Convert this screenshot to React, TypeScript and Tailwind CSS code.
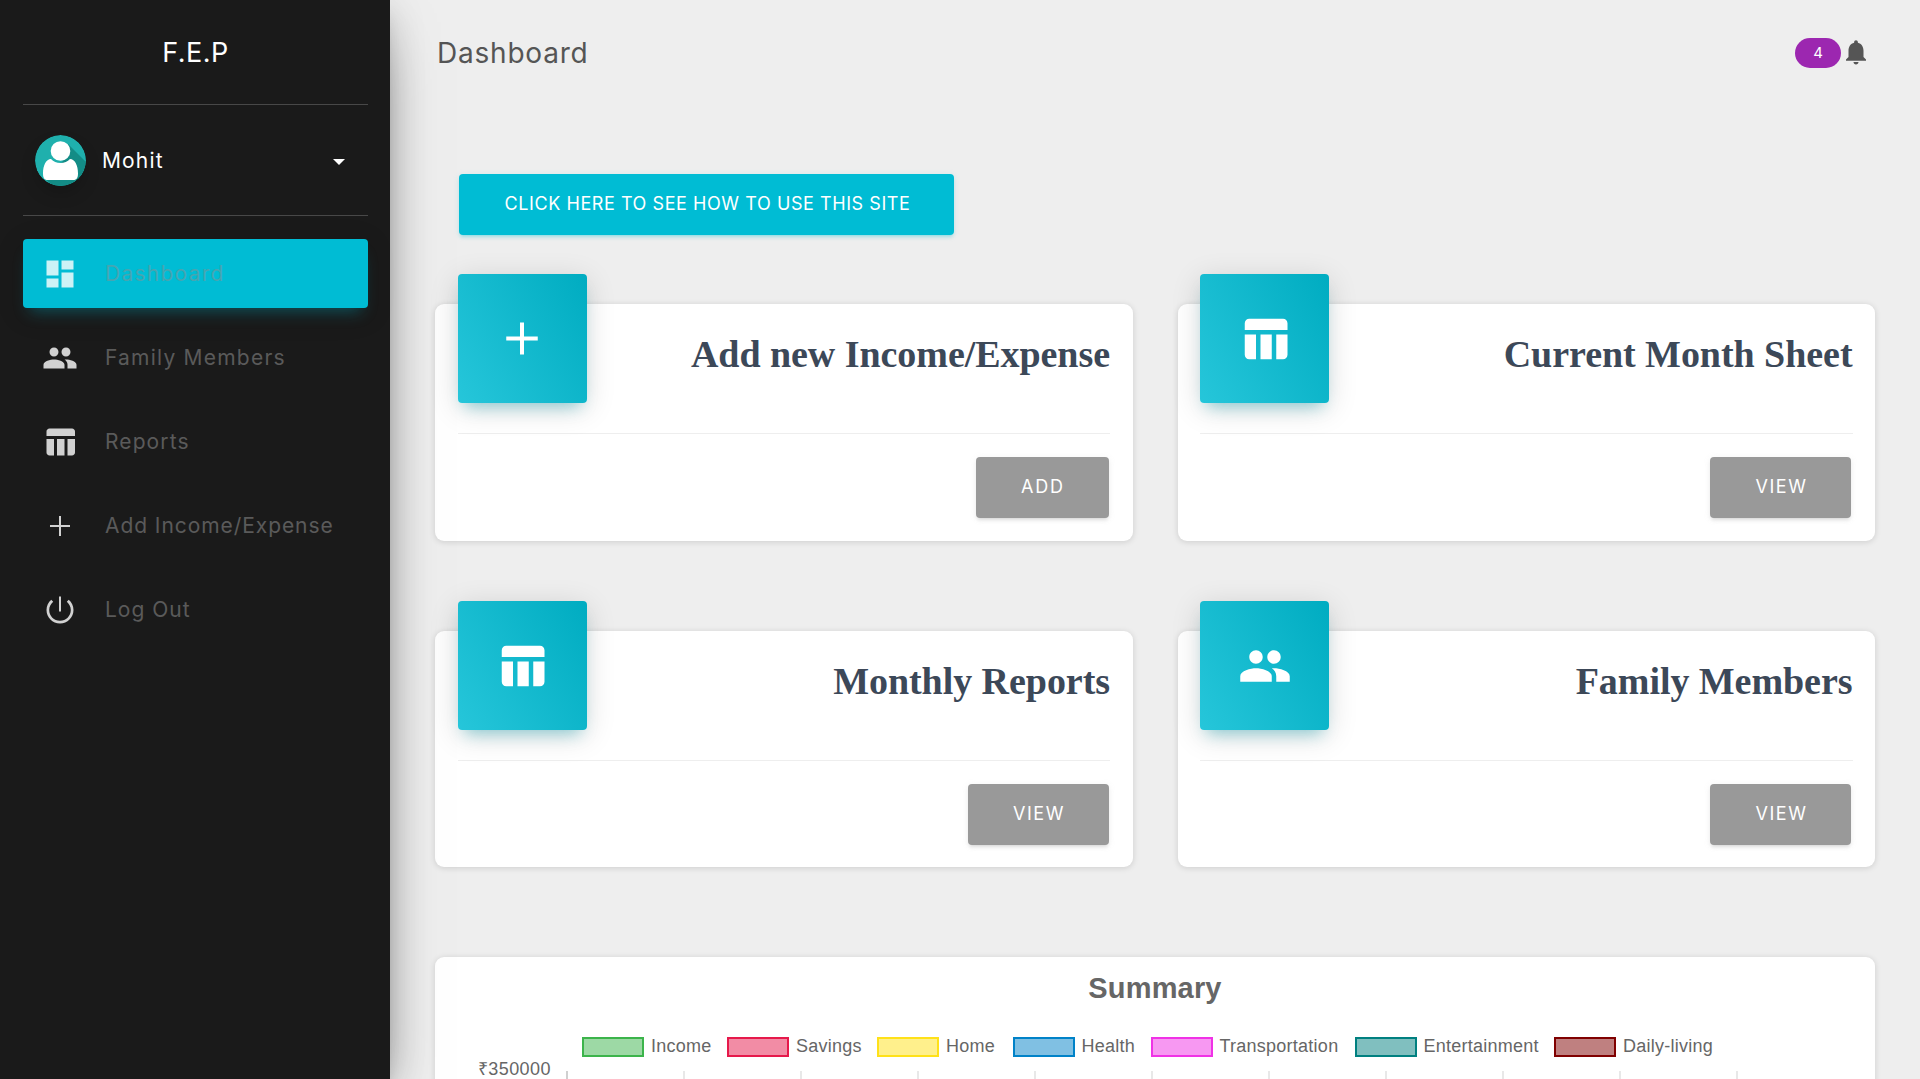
import type { ReactNode } from "react";

const PATHS = {
  dashboard: "M3 13h8V3H3v10zm0 8h8v-6H3v6zm10 0h8V11h-8v10zm0-18v6h8V3h-8z",
  people:
    "M16 11c1.66 0 2.99-1.34 2.99-3S17.66 5 16 5c-1.66 0-3 1.34-3 3s1.34 3 3 3zm-8 0c1.66 0 2.99-1.34 2.99-3S9.66 5 8 5C6.34 5 5 6.34 5 8s1.34 3 3 3zm0 2c-2.33 0-7 1.17-7 3.5V19h14v-2.5c0-2.33-4.67-3.5-7-3.5zm8 0c-.29 0-.62.02-.97.05 1.16.84 1.97 1.97 1.97 3.45V19h6v-2.5c0-2.33-4.67-3.5-7-3.5z",
  table:
    "M10 10.02h5V21h-5V10.02zM17 21h3c1.1 0 2-.9 2-2v-9h-5v11zm3-18H5c-1.1 0-2 .9-2 2v3h19V5c0-1.1-.9-2-2-2zM3 19c0 1.1.9 2 2 2h3V10H3v9z",
  add: "M19 12.67h-6.11v6.22h-1.78v-6.22H5v-1.78h6.11V4.67h1.78v6.22H19z",
  addThin: "M18.67 12.67H12.67V18.67H11.33V12.67H5.33V11.33H11.33V5.33H12.67V11.33H18.67z",
  power:
    "M12.67 3h-1.34v10h1.34V3zm5.16 2.17l-1.3 1.3C18.1 7.86 19.2 9.7 19.2 12c0 3.98-3.22 7.2-7.2 7.2s-7.2-3.22-7.2-7.2c0-2.3 1.1-4.14 2.67-5.53L6.17 5.17C4.23 6.82 3 9.26 3 12c0 4.97 4.03 9 9 9s9-4.03 9-9c0-2.74-1.23-5.18-3.17-6.83z",
  bell: "M12 22c1.1 0 2-.9 2-2h-4c0 1.1.89 2 2 2zm6-6v-5c0-3.07-1.64-5.64-4.5-6.32V4c0-.83-.67-1.500-1.500-1.500s-1.500.67-1.500 1.500v.68C7.63 5.36 6 7.92 6 11v5l-2 2v1h16v-1l-2-2z",
};

type IconName = keyof typeof PATHS;

function Icon({ name, className }: { name: IconName; className: string }) {
  return (
    <svg viewBox="0 0 24 24" fill="currentColor" className={className}>
      <path d={PATHS[name]} />
    </svg>
  );
}

function Avatar() {
  return (
    <svg
      viewBox="0 0 51 51"
      className="size-[51px] shrink-0 rounded-full shadow-[0_9px_18px_-4px_rgba(0,0,0,0.25)]"
    >
      <defs>
        <clipPath id="avatar-disc">
          <circle cx="25.5" cy="25.5" r="25.5" />
        </clipPath>
      </defs>
      <g clipPath="url(#avatar-disc)">
        <rect width="51" height="51" fill="#1fb0ad" />
        <path d="M33 9 L53 29 V53 H21 L10 44 L28 26Z" fill="#138c86" />
        <circle cx="25.5" cy="16" r="9.8" fill="#fff" />
        <path
          d="M16 24c2.500 2.600 5.500 4 9.500 4s7-1.400 9.500-4c5 0 8 6.500 8 14.500 0 5-2 6.500-4.700 6.500h-25.600c-2.700 0-4.700-1.500-4.700-6.500 0-8 3-14.500 8-14.500z"
          fill="#fff"
        />
      </g>
    </svg>
  );
}

const NAV: { icon: IconName; label: string; spacing: string; active?: boolean }[] = [
  { icon: "dashboard", label: "Dashboard", spacing: "tracking-[1.26px]", active: true },
  { icon: "people", label: "Family Members", spacing: "tracking-[1.22px]" },
  { icon: "table", label: "Reports", spacing: "tracking-[1.1px]" },
  { icon: "addThin", label: "Add Income/Expense", spacing: "tracking-[0.93px]" },
  { icon: "power", label: "Log Out", spacing: "tracking-[1px]" },
];

function Sidebar() {
  return (
    <aside className="relative z-10 flex w-[390px] shrink-0 flex-col bg-[#1a1a1a] pr-[22px] pl-[23px] font-[Inter,sans-serif] shadow-[0_24px_57px_-18px_rgba(0,0,0,0.56),0_6px_37px_0_rgba(0,0,0,0.12),0_12px_15px_-7px_rgba(0,0,0,0.2)]">
      <div className="flex h-[105px] items-center justify-center border-b border-[#484848] pt-[2px] text-[27px] tracking-[0.5px] text-white">
        F.E.P
      </div>
      <div className="flex h-[111px] items-center border-b border-[#484848] pl-3">
        <Avatar />
        <span className="mt-[2px] ml-4 text-[21px] tracking-[1.15px] text-white">Mohit</span>
        <span className="mt-[3px] mr-[23px] ml-auto border-x-6 border-t-6 border-x-transparent border-t-white" />
      </div>
      <nav className="mt-[23px] flex flex-col gap-[15px]">
        {NAV.map((item) => (
          <a
            key={item.label}
            className={
              item.active
                ? "flex h-[69px] items-center rounded-[4px] bg-[#00bcd4] pl-[19px] text-[#46a5b1] shadow-[0_6px_30px_0_rgba(0,0,0,0.12),0_10px_15px_-7px_rgba(0,188,212,0.4)]"
                : "flex h-[69px] items-center pl-[19px] text-[#5a5a5a]"
            }
          >
            <Icon
              name={item.icon}
              className={item.active ? "size-9 text-[#ccf2f6]" : "size-9 text-[#d1d1d1]"}
            />
            <span className={`mt-[1px] ml-[27px] text-[21px] whitespace-nowrap ${item.spacing}`}>
              {item.label}
            </span>
          </a>
        ))}
      </nav>
    </aside>
  );
}

function Button({ children, className }: { children: ReactNode; className: string }) {
  return (
    <button
      className={`flex h-[61px] items-center justify-center rounded-[4px] pb-[2px] pl-[2px] font-[Inter,sans-serif] text-[18px] text-white ${className}`}
    >
      {children}
    </button>
  );
}

const GREY_SHADOW =
  "bg-[#999] shadow-[0_3px_3px_0_rgba(153,153,153,0.14),0_4px_2px_-3px_rgba(153,153,153,0.2),0_1px_7px_0_rgba(153,153,153,0.12)]";

function ActionCard({ icon, title, action }: { icon: IconName; title: string; action: string }) {
  return (
    <section className="rounded-[9px] bg-white px-[22.5px] shadow-[0_1px_6px_0_rgba(0,0,0,0.14)]">
      <div className="flex h-[130px] items-start justify-between border-b border-[#eee]">
        <div className="-mt-[30px] flex size-[129px] shrink-0 items-center justify-center rounded-[4px] bg-[linear-gradient(60deg,#26c6da,#00acc1)] shadow-[0_6px_30px_0_rgba(0,0,0,0.14),0_10px_15px_-7px_rgba(0,172,193,0.4)]">
          <Icon name={icon} className="size-[54px] text-white" />
        </div>
        <h3 className="mt-[28px] font-['Liberation_Serif',serif] text-[38px] leading-[44px] font-bold tracking-[-0.05px] whitespace-nowrap text-[#3c4858]">
          {title}
        </h3>
      </div>
      <div className="flex justify-end pt-[23px] pr-[1.5px]">
        <Button
          className={`${GREY_SHADOW} ${
            action === "ADD" ? "w-[133px] tracking-[1.8px]" : "w-[141px] tracking-[1.5px]"
          }`}
        >
          {action}
        </Button>
      </div>
    </section>
  );
}

const LEGEND = [
  { label: "Income", width: "w-[145px]", swatch: "border-[#3cb44b] bg-[#9dd9a5]" },
  { label: "Savings", width: "w-[150px]", swatch: "border-[#e6194b] bg-[#f28ca5]" },
  { label: "Home", width: "w-[135.5px]", swatch: "border-[#ffe119] bg-[#fff08c]" },
  { label: "Health", width: "w-[138px]", swatch: "border-[#0082c8] bg-[#80c0e3]" },
  { label: "Transportation", width: "w-[204px]", swatch: "border-[#f032e6] bg-[#f798f2]" },
  { label: "Entertainment", width: "w-[199.5px]", swatch: "border-[#008080] bg-[#80bfbf]" },
  { label: "Daily-living", width: "w-[170px]", swatch: "border-[#800000] bg-[#bf8080]" },
];

function Summary() {
  return (
    <section className="mt-[90px] h-[400px] shrink-0 rounded-[9px] bg-white font-['Liberation_Sans',sans-serif] text-[#666] shadow-[0_1px_6px_0_rgba(0,0,0,0.14)]">
      <h2 className="pt-[14px] text-center text-[29px] leading-[34px] font-bold tracking-[0.16px]">
        Summary
      </h2>
      <div className="mt-[32px] ml-[147px] flex h-5 items-center">
        {LEGEND.map((l) => (
          <div key={l.label} className={`flex shrink-0 items-center gap-[7px] ${l.width}`}>
            <span className={`h-5 w-[62px] shrink-0 border-2 ${l.swatch}`} />
            <span className="-mt-[3px] text-[18px] leading-5 tracking-[0.25px] whitespace-nowrap">
              {l.label}
            </span>
          </div>
        ))}
      </div>
      <div className="flex">
        <div className="mt-[3px] h-5 w-[116px] shrink-0 text-right text-[18px] leading-[18px] tracking-[0.45px]">
          ₹350000
        </div>
        <div className="mt-[14px] ml-[15px] grid h-[250px] w-[1287px] grid-cols-11">
          {Array.from({ length: 11 }, (_, i) => (
            <div
              key={i}
              className={i === 0 ? "border-l-2 border-[#d0d0d0]" : "border-l-2 border-[#e8e8e8]"}
            />
          ))}
        </div>
      </div>
    </section>
  );
}

export default function App() {
  return (
    <div className="flex h-[1079px] w-full overflow-hidden bg-[#eee]">
      <Sidebar />
      <main className="flex min-w-0 flex-1 flex-col pr-[45px] pl-[45px]">
        <header className="flex h-[104px] shrink-0 items-center justify-between pr-1 pl-[2px] font-[Inter,sans-serif]">
          <h1 className="mt-[1px] text-[28px] tracking-[0.78px] text-[#555]">Dashboard</h1>
          <div className="flex items-center">
            <span className="mt-[2px] flex h-[30px] w-[46px] items-center justify-center rounded-full bg-[#9c27b0] text-[15px] text-white">
              4
            </span>
            <Icon name="bell" className="-mt-[1px] size-[30px] text-[#555]" />
          </div>
        </header>
        <div className="mt-[70px] pl-6">
          <Button className="w-[495px] bg-[#00bcd4] tracking-[0.57px] shadow-[0_3px_3px_0_rgba(0,188,212,0.14),0_4px_2px_-3px_rgba(0,188,212,0.2),0_1px_7px_0_rgba(0,188,212,0.12)]">
            CLICK HERE TO SEE HOW TO USE THIS SITE
          </Button>
        </div>
        <div className="mt-[69px] grid shrink-0 grid-cols-2 grid-rows-[237px_236px] gap-x-[45px] gap-y-[90px]">
          <ActionCard icon="add" title="Add new Income/Expense" action="ADD" />
          <ActionCard icon="table" title="Current Month Sheet" action="VIEW" />
          <ActionCard icon="table" title="Monthly Reports" action="VIEW" />
          <ActionCard icon="people" title="Family Members" action="VIEW" />
        </div>
        <Summary />
      </main>
    </div>
  );
}
